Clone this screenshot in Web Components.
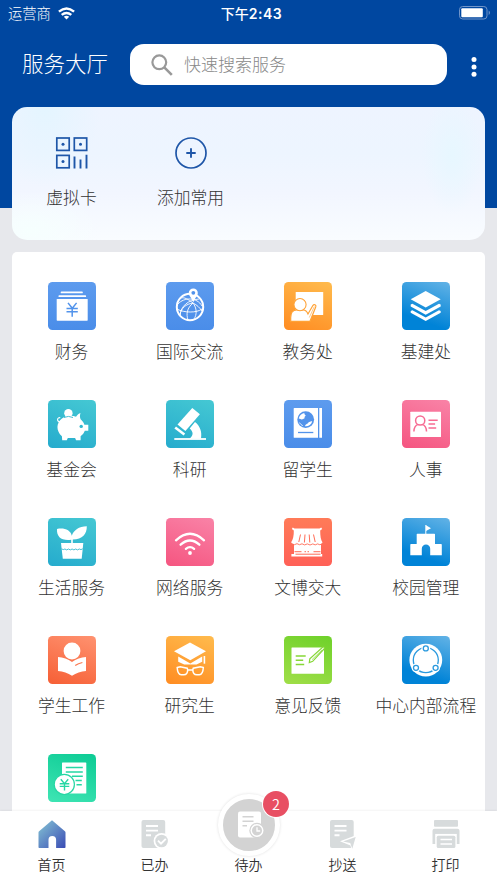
<!DOCTYPE html>
<html lang="zh-CN">
<head>
<meta charset="utf-8">
<title>服务大厅</title>
<style>
html,body{margin:0;height:100%;overflow:hidden}
body{font-family:"Noto Sans CJK SC",sans-serif;color:#333}
</style>
</head>
<body>
<service-hall></service-hall>
<script>
const define = (name, html) => customElements.define(name, class extends HTMLElement {
  connectedCallback() {
    if (this.shadowRoot) return;
    const t = document.createElement('template');
    t.innerHTML = typeof html === 'function' ? html(this) : html;
    this.attachShadow({mode: 'open'}).append(t.content.cloneNode(true));
  }
});

// Fills for the 48px tiles: angle, start, end
const fills = {
  blue: '180deg,#5d9bee,#4a8de9', orange: '200deg,#ffbb4d,#ff8c22', sky: '200deg,#63b3e6,#0083d7 75%',
  teal: '200deg,#45c8d3,#25abcd', pink: '200deg,#f983a7,#f55580', coral: '180deg,#ff7b58,#ff6057',
  red: '200deg,#ff9270,#f65f35', green: '20deg,#a0de48,#6ed12a', mint: '20deg,#3fe5b4,#0ccb94'
};

// Glyphs on a 48x48 grid; "b" is the colour that shows the tile through the white
const glyphs = {
  finance: b => `<path d="M13.5 10.4h20.5M11.3 14.2h26" stroke="#fff" stroke-width="1.7" stroke-linecap="round"/><rect x="8.7" y="17" width="31" height="21.7" rx=".6" fill="#fff"/><path d="M20 20.9l4.300 5.300 4.300-5.300M18.500 26.400h11.300M18.500 29.700h11.300M24.200 26v8.800" stroke="${b}" stroke-width="1.500"/>`,
  globe: b => `<g stroke="#fff"><circle cx="24" cy="25" r="13.200" stroke-width="2"/><g stroke-width=".9"><path d="M12 22C18 15 31 15 36 24M11 27c7 4 20 4 25 0M14 33c1-9 8-15 19-16M27 21c-6 5-7 11-5 17M27 21c4 5 4 12 1 16M27 21c-5-4-9-6-12-5M27 21c-7 1-12 5-13 12M27 21c4 2 7 5 9 8"/></g></g><path d="M22.800 10.900a4.500 4.500 0 1 1 9 0c0 3-3.300 5.400-4.500 9.400-1.200-4-4.500-6.400-4.500-9.400z" fill="#fff"/><circle cx="27.300" cy="10.800" r="1.900" fill="${b}"/>`,
  teach: b => `<rect x="11.700" y="10" width="27.500" height="23" rx=".6" fill="#fff"/><path d="M6.700 39.300v-3.800c0-4.500 2.200-7.500 6-7.500h6.500c2.300 0 3.800 1.500 4.800 4l5-8.700c1-1.400 3.400-.4 2.800 1.400L26 39.300z" fill="#fff" stroke="${b}" stroke-width="1.200"/><path d="M25.300 35.500l5-11" stroke="${b}" stroke-width=".6"/><circle cx="16" cy="22.600" r="6.100" fill="#fff" stroke="${b}" stroke-width="1.100"/>`,
  layers: b => `<g fill="#fff"><path d="M23.700 9l15 8.200-15 8.400-15-8.400z"/><path d="M8.700 22.600l1.700-.8 13.300 7.200L37 21.800l1.700.8v2l-15 8.200-15-8.200z"/><path d="M8.700 29l1.700-.8 13.300 7.200L37 28.200l1.700.8v1.800l-15 8.200-15-8.200z"/></g>`,
  piggy: b => `<circle cx="20.400" cy="13.200" r="4.200" fill="#fff"/><path d="M14 18.500c4-3 10-3.200 14-1.800 1.200-2 3-3.300 4.500-3.800-.8 2.300-.7 4.300.1 6.300 1.800 1.500 3 3 3.800 5.500h3.900v6h-3.500c-1 2.500-2.300 4-4.200 5.500v4h-4.500l-1-2.200h-7.300l-1 2.200h-4.600l-.3-4C8 31 8 23 14 18.500z" fill="#fff"/><path d="M12 22c-3.300-.7-3.300-4.700.3-4.300" stroke="#fff" stroke-width="1.100"/><circle cx="33.200" cy="26.400" r="1.700" fill="${b}"/><path d="M16 17.500q4.400-2.200 9 0" stroke="${b}" stroke-width=".9"/>`,
  scope: b => `<path d="M26.300 8l7.600 6.200L19.400 31 11.500 24.600z" fill="#fff"/><path d="M9.200 27.400l9.200 7.200" stroke="#fff" stroke-width="2.600"/><path d="M29 22c5 4 7.200 9.500 6 16.700H23.500c4-3 4.200-6.700.2-10.200z" fill="#fff"/><path d="M8.300 39H40" stroke="#fff" stroke-width="1.800"/>`,
  book: b => `<path d="M9.700 8.600q0-.6.6-.6H34v29.800H10.300q-.6 0-.6-.6zM35.300 8H38v29.800h-2.700z" fill="#fff"/><circle cx="21.700" cy="19.600" r="8.400" fill="${b}"/><path d="M20.300 12.900c-3 .6-5.200 2.800-5.500 5.700 1.700.2 2.300 1.400 3.700.7.700-.8 1.600-.3 2.200-1.300-.6-1 .2-1.600 1-2.300-.3-1.200-1.400-1-1.400-2.800zM28.200 21.500c-1.500-.7-2.300.5-3.800 1-.8 1.700-2.800 1.300-3.400 3.700 3.500.3 6.300-1.500 7.200-4.700z" fill="#fff"/><path d="M15.300 22.500c1 1.500 2 2.500 3.500 3.200" stroke="#fff" stroke-width=".8"/><path d="M14 32.500h15.300" stroke="${b}" stroke-width="1.300"/>`,
  person: b => `<rect x="8.300" y="11.700" width="30.700" height="25.300" rx=".6" fill="#fff"/><g stroke="${b}" stroke-width="1.500"><circle cx="18.200" cy="20.500" r="4.600"/><path d="M11.900 31.500c.1-4 1.500-6.200 4.300-7.100M24.500 31.500c-.1-4-1.500-6.200-4.300-7.100M26.500 20.200h9.200M26.500 24.100h6.600M26.500 28.100h7.700"/></g>`,
  plant: b => `<path d="M9 11c7-1.500 13.700 1 14.800 6.800C25.500 12.500 31 8.300 38.800 8.300 39 16 34.500 21.300 24.800 21.500V25h-1.600v-3.200C13.500 23 8.500 19 9 11z" fill="#fff"/><path d="M13 25h22.300l-1.600 15.800H14.800z" fill="#fff"/><path d="M13.500 30.800q1.800 1.500 3.400.2 1.800 1.800 3.600 0 1.800 1.800 3.600 0 1.800 1.800 3.600 0 1.800 1.800 3.600 0 1.600 1.300 3.400-.2" stroke="${b}" stroke-width=".9"/>`,
  wifi: b => `<g stroke="#fff" stroke-width="2.300" stroke-linecap="round"><path d="M10 22.300q14-13 28 0M14.600 26.700q9.400-8.300 18.800 0M19.900 30.900q4.100-3.500 8.200 0"/></g><circle cx="24" cy="35" r="1.900" fill="#fff"/>`,
  shop: b => `<path d="M8.800 9.500l1.700 1.100h25l1.700-1.100 1 1.500-2 1.500c0 5.500.6 9.500 2.300 12-1.500 2.700-4.500 2.300-5.300.3-1.300 2.500-4.400 2.500-5.200 0-1.500 2.500-4.700 2.500-5.500 0-1.500 2.500-4.700 2.500-5.300 0-1.500 2.200-4.400 2-5 0-1.500 1.700-4.200 1.700-5-.5C9 21.500 10 17.500 9.800 12.500L7.800 11z" fill="#fff"/><path d="M16.500 16.500l-1.700 7.500M21 16.500l-.6 8M25.200 16.500l.6 8M29.500 16.500l1.700 7.500" stroke="${b}" stroke-width="1"/><path d="M10 25h27v11h1.200v2.500H7.400V36H10z" fill="#fff"/><path d="M7.500 26q3 1.500 5.500-.3 2.500 2 5 .1 2.600 2.200 5.300.1 2.700 2.200 5.500 0 2.400 2 4.800 0 2.200 1.700 4.600 0" stroke="${b}" stroke-width=".9"/><path d="M10.500 33.700h7M29.500 33.700h7M11.500 36.200h25M20.500 33.700h1.500M23.500 33.700h1.500" stroke="${b}" stroke-width="1"/>`,
  school: b => `<path d="M14.700 16.300q0-.6.600-.6h17.100q.6 0 .6.600V26h6.100q.7 0 .7.700v10.500H28.200v-6.500a4.200 4.200 0 0 0-8.400 0v6.500H8.300V26.700q0-.7.700-.7h5.700z" fill="#fff"/><path d="M23.800 7v9" stroke="#fff" stroke-width="1"/><path d="M24 7.200l5 3-5 2.900z" fill="#fff"/>`,
  reader: b => `<circle cx="24" cy="15" r="8.400" fill="#fff"/><path d="M10 20.900c5 .4 10 2 14 5 4-3 9-4.700 14-5V35c-5 .6-10 2-14 4.700-4-2.700-9-4.100-14-4.700z" fill="#fff"/><path d="M27.200 29.500q3-2.100 7.200-3" stroke="${b}" stroke-width="1.200"/>`,
  grad: b => `<path d="M24 6.500l16 8.800-15.700 9L8 15.300zM12.200 20.600l12.100 7 11.900-7v5.200l-5.700 2.800h-12.300l-6-2.800z" fill="#fff"/><path d="M38.400 20v7.700" stroke="#fff" stroke-width="1.600"/><path d="M11.200 31.500l3-.7 7 1.400.5 1.500c0 3-1 5-4 5h-2.500c-3 0-3.800-3-4-7.200zM37.300 31.500l-3-.7-7 1.400-.5 1.500c0 3 1 5 4 5h2.500c3 0 3.800-3 4-7.200zM21.700 34h5.200" stroke="#fff" stroke-width="1.500"/>`,
  feedback: b => `<rect x="7.500" y="11.400" width="32.500" height="26.300" rx=".5" fill="#fff"/><path d="M11.700 20h10M11.700 24.300h7.500M11.700 28.400h8.500" stroke="${b}" stroke-width="1.500"/><path d="M25.300 26.500l.5-3.700 13-11.700q1.800-.4 1.700 1.300L28.700 25.300z" fill="#fff" stroke="${b}" stroke-width="1.200"/><path d="M28 23.700l10-9.800" stroke="${b}" stroke-width=".7"/>`,
  flow: b => `<circle cx="23.800" cy="24.100" r="16.400" fill="#fff"/><circle cx="23.800" cy="24.100" r="12.500" stroke="${b}" stroke-width="1.300"/><g fill="#fff"><circle cx="23.800" cy="12.400" r="4.400"/><circle cx="14" cy="31.800" r="4.400"/><circle cx="33.600" cy="31.800" r="4.400"/></g><g stroke="${b}" stroke-width="1.300"><circle cx="23.800" cy="12.400" r="2.500"/><circle cx="14" cy="31.800" r="2.500"/><circle cx="33.600" cy="31.800" r="2.500"/></g>`,
  bill: b => `<rect x="14" y="8.500" width="24.300" height="31" rx=".6" fill="#fff"/><path d="M17.800 13.500h17M17.800 17.900h17M24 22.200h10.800M27.500 26.500h6.300M28.500 30.700h5.300" stroke="${b}" stroke-width="1.500"/><circle cx="16.300" cy="30.400" r="10.100" fill="#fff" stroke="${b}" stroke-width="1.200"/><path d="M12.800 25.300l3.700 4.300 3.700-4.300M11.700 29.700h9.600M11.700 32.400h9.600M16.500 29.500v7" stroke="${b}" stroke-width="1.400"/>`
};
const ink = {blue:'#5293eb',orange:'#ffa236',sky:'#2999de',teal:'#34b8d0',pink:'#f76c93',coral:'#ff6c57',red:'#fa7851',green:'#86d737',mint:'#26d7a4'};

define('status-bar', `<style>
:host{display:grid;grid-template-columns:1fr auto 1fr;align-items:center;height:26px;padding:0 6px 0 8px;color:#fff;font-size:14.300px;line-height:24px;font-weight:300}
.l{display:flex;align-items:center;gap:7px}.t{font-weight:500;font-size:14px;padding-left:4px}.t b{font:600 14px Inter,sans-serif;letter-spacing:.5px}.r{justify-self:end;display:flex}svg{display:block}
</style><span class="l"><span>运营商</span><svg width="17" height="13" viewBox="0 0 17 13" fill="none" stroke="#fff" stroke-width="2.400"><path d="M.9 4.700q7.600-6.400 15.200 0M3.700 7.900q4.800-4 9.600 0"/><path d="M5.800 9.800q2.700-2 5.400 0l-2.700 2.700z" fill="#fff" stroke="none"/></svg></span>
<span class="t">下午<b>2:43</b></span>
<span class="r"><svg width="32" height="14" viewBox="0 0 32 14"><rect x=".5" y=".5" width="27.500" height="12.500" rx="3.200" fill="none" stroke="#7195c9"/><rect x="2.300" y="2.300" width="21.500" height="9" rx="1" fill="#fff"/><path d="M29.700 4.500q2.500 2.200 0 4.500z" fill="#7195c9"/></svg></span>`);

define('search-field', `<style>
:host{display:flex;align-items:center;gap:11px;box-sizing:border-box;width:317px;height:41px;padding-left:21px;border-radius:14px;background:#fff;color:#888;font-size:17px;font-weight:300}
svg{display:block}slot{display:block;line-height:24px;margin-top:-1px}</style><svg width="22" height="22" viewBox="0 0 22 22" fill="none" stroke="#999" stroke-width="2.200"><circle cx="8.300" cy="8.300" r="6.900"/><path d="M13.300 13.300l7.500 7.500" stroke-width="2.600"/></svg><slot></slot>`);

define('title-bar', `<style>
:host{display:flex;align-items:center;height:77px;padding-left:22px;color:#fff;font-size:21.500px;font-weight:300;box-sizing:border-box}
.n{width:108px;line-height:30px;padding-bottom:3px}.m{margin-left:24px;padding-top:5px}svg{display:block}</style>
<span class="n">服务大厅</span><search-field>快速搜索服务</search-field><svg class="m" width="6" height="20" fill="#fff"><circle cx="3" cy="2.600" r="2.500"/><circle cx="3" cy="9.900" r="2.500"/><circle cx="3" cy="17.200" r="2.500"/></svg>`);

define('quick-entry', el => `<style>
:host{display:flex;flex-direction:column;align-items:center;width:119px;font-size:16.800px;line-height:26px;font-weight:300}
svg{display:block;margin:29.500px 0 13.500px}</style><svg width="34" height="34" viewBox="0 0 34 34" fill="none" stroke="#1e56a8">${el.getAttribute('icon') === 'code'
 ? '<g stroke-width="1.700"><rect x="1.800" y="2" width="12.400" height="12.400"/><rect x="19.300" y="2" width="12.400" height="12.400"/><rect x="1.800" y="19.400" width="12.400" height="12.400"/><path d="M19.500 20.500v12M25.500 23.500v9M31.500 18.700v13.800" stroke-width="1.900"/></g><g fill="#1e56a8" stroke="none"><circle cx="8" cy="8.200" r="1.500"/><circle cx="25.500" cy="8.200" r="1.500"/><circle cx="8" cy="25.600" r="1.500"/></g>'
 : '<circle cx="17" cy="17" r="15" stroke-width="1.700"/><path d="M17 12.300v9.400M12.300 17h9.400" stroke-width="1.900"/>'}</svg><slot></slot>`);

define('quick-card', `<style>
:host{display:flex;box-sizing:border-box;height:133px;margin:3.500px 12px 0;border-radius:15px;background:radial-gradient(ellipse 30px 60px at 93% 36%,#e7f7ff,#e7f7ff00),radial-gradient(ellipse 55px 80px at 7% 0,#e4f5ff,#e4f5ff00),radial-gradient(ellipse 70px 40px at 4% 93%,#f6fffe,#f6fffe00),linear-gradient(180deg,#eef4ff,#edf5ff 35%,#f2f6ff 65%,#f9fcff)}
</style><slot></slot>`);

define('service-item', el => {
  const c = el.getAttribute('tone');
  return `<style>
:host{display:flex;flex-direction:column;align-items:center;height:118px;font-size:16.800px;line-height:26px;font-weight:300;white-space:nowrap}
.i{width:48px;height:48px;border-radius:4.500px;background:linear-gradient(${fills[c]});margin-bottom:8px}svg{display:block}</style>
<div class="i"><svg width="48" height="48" viewBox="0 0 48 48" fill="none">${glyphs[el.getAttribute('icon')](ink[c])}</svg></div><slot></slot>`;
});

define('service-grid', `<style>
:host{display:grid;grid-template-columns:repeat(4,118.100px);grid-auto-rows:118.100px;margin:12px 12px 0;padding:30px 0 0 .5px;height:570px;background:#fff;border-radius:5px 5px 0 0;box-sizing:content-box}
</style><slot></slot>`);

const tabIcons = {
  home: '<defs><linearGradient id="h" x1="0" y1="0" x2="1" y2="1"><stop offset="0" stop-color="#86c7d5"/><stop offset="1" stop-color="#3a4bb4"/></linearGradient></defs><path d="M14 .2l12.900 11q.6.500.6 1.200v14.800q0 .8-.8.800h-8.600v-8.300a3.800 3.800 0 0 0-7.600 0V28H1.300q-.8 0-.8-.8V12.400q0-.7.6-1.200z" fill="url(#h)"/>',
  done: '<rect x=".5" width="23.700" height="28" rx="2" fill="#d7dbdc"/><path d="M5 6h12M5 10.600h12M5 15.200h5" stroke="#fff" stroke-width="1.900"/><circle cx="20.600" cy="21" r="8" fill="#fff"/><circle cx="20.600" cy="21" r="6.300" fill="#d7dbdc"/><path d="M17 20.700l3 3 4.800-4.900" stroke="#fff" stroke-width="1.900"/>',
  send: '<rect x="1" width="23.700" height="28" rx="2" fill="#d7dbdc"/><path d="M5.500 6h12M5.500 10.600h12M5.500 15.200h5" stroke="#fff" stroke-width="1.900"/><path d="M11 21.300L29 14.500V32h-6l-1.500-6.500z" fill="#fff"/><path d="M14 21.600l12.700-4.700-3.400 11.800-2.100-5.600z" fill="#d7dbdc"/>',
  print: '<g fill="#d7dbdc"><rect x="2" width="24" height="6.800" rx="1"/><path d="M2.500 8.700h23q2 0 2 2V24h-2.700V13.800H3.200V24H.5V10.700q0-2 2-2z"/><rect x="4.700" y="15.700" width="18.700" height="12.300" rx="1.500"/></g><path d="M3 9.500h22v4.300H3z" fill="#d7dbdc"/><path d="M8.500 19.500h11.500M8.500 24h11.500" stroke="#fff" stroke-width="1.600"/>',
  todo: '<rect x="3" y=".5" width="23" height="26" rx="2" fill="#fff"/><path d="M7.500 5.700h11M7.500 10.200h11M7.500 14.700h4.500" stroke="#d3d3d3" stroke-width="1.600"/><circle cx="22" cy="19.500" r="7.700" fill="#d3d3d3"/><circle cx="22" cy="19.500" r="6.500" fill="#fff"/><circle cx="22" cy="19.500" r="5" fill="#d3d3d3"/><path d="M22 16.200v3.800h3.200" stroke="#fff" stroke-width="1.300"/>'
};

define('tab-item', el => {
  const n = el.getAttribute('badge');
  const svg = `<svg width="28" height="28" viewBox="0 0 28 28" fill="none">${tabIcons[el.getAttribute('icon')]}</svg>`;
  return `<style>
:host{display:flex;position:relative;flex-direction:column;align-items:center;box-sizing:border-box;height:72px;padding:9px 0 8px;font-size:14px;line-height:22px;font-weight:350}
svg{display:block;overflow:visible}
.disc{position:absolute;left:50%;top:-17px;width:52px;height:52px;margin-left:-31px;border:5px solid #fff;border-radius:50%;background:#d3d3d3;box-shadow:0 0 3px #0002;display:flex;align-items:center;justify-content:center}
.badge{position:absolute;left:57px;top:-20px;width:26px;height:26px;border-radius:50%;background:#e84f63;box-shadow:0 0 0 1px #fff;color:#fff;font-size:14.500px;line-height:26px;text-align:center}
.label{margin-top:auto}</style>${n ? `<div class="disc">${svg}</div><span class="badge">${n}</span>` : svg}<span class="label"><slot></slot></span>`;
});

define('tab-bar', `<style>
:host{display:grid;grid-template-columns:103px 103px 85px 103px 103px;flex:none;height:72px;background:#fff;box-shadow:0 -1px 2px #0000000c;position:relative}
</style><slot></slot>`);

const services = [
  ['finance','blue','财务'],['globe','blue','国际交流'],['teach','orange','教务处'],['layers','sky','基建处'],
  ['piggy','teal','基金会'],['scope','teal','科研'],['book','blue','留学生'],['person','pink','人事'],
  ['plant','teal','生活服务'],['wifi','pink','网络服务'],['shop','coral','文博交大'],['school','sky','校园管理'],
  ['reader','red','学生工作'],['grad','orange','研究生'],['feedback','green','意见反馈'],['flow','sky','中心内部流程'],
  ['bill','mint','']
];

define('service-hall', `<style>
:host{display:flex;flex-direction:column;height:883px;width:497px;overflow:hidden;background:linear-gradient(#0047a0 208.500px,#e7e8ec 208.500px)}
main{flex:1;min-height:0;overflow:hidden}</style>
<status-bar></status-bar><title-bar></title-bar>
<main><quick-card><quick-entry icon="code">虚拟卡</quick-entry><quick-entry icon="add">添加常用</quick-entry></quick-card>
<service-grid>${services.map(([i, t, n]) => `<service-item icon="${i}" tone="${t}">${n}</service-item>`).join('')}</service-grid></main>
<tab-bar><tab-item icon="home">首页</tab-item><tab-item icon="done">已办</tab-item><tab-item icon="todo" badge="2">待办</tab-item><tab-item icon="send">抄送</tab-item><tab-item icon="print">打印</tab-item></tab-bar>`);
</script>
</body>
</html>
